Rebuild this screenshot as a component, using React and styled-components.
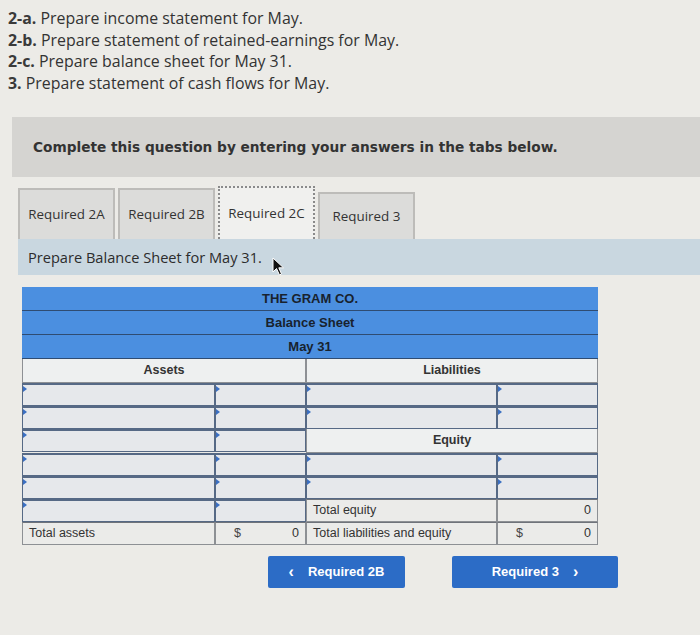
import { Fragment } from "react";
import styled, { createGlobalStyle, css } from "styled-components";

const GlobalStyle = createGlobalStyle`
  html, body {
    margin: 0;
    padding: 0;
    background: #ecebe7;
  }
  body {
    font-family: "Open Sans", "Liberation Sans", sans-serif;
    color: #2e2e2e;
  }
`;

const Page = styled.div`
  width: 700px;
  height: 635px;
  overflow: hidden;
  position: relative;
  background: #ecebe7;
`;

const TaskList = styled.ol`
  list-style: none;
  margin: 0;
  padding: 8px 0 0 8px;
  font-family: "Open Sans", sans-serif;
  font-size: 15.9px;
  line-height: 21.7px;
  color: #333;
`;

const TaskNum = styled.b`
  font-weight: 700;
  color: #3a3a3a;
`;

const Banner = styled.div`
  margin: 22px 0 0 12px;
  height: 60px;
  display: flex;
  align-items: center;
  padding-left: 21px;
  background: #d5d4d1;
  font-family: "DejaVu Sans", Verdana, sans-serif;
  font-weight: 700;
  font-size: 13.7px;
  color: #333;
`;

const TabRow = styled.div`
  display: flex;
  align-items: flex-end;
  gap: 3px;
  margin: 9px 0 0 18px;
  height: 53px;
`;

const Tab = styled.div`
  width: 97px;
  height: ${({ $short }) => ($short ? "47px" : "51px")};
  box-sizing: border-box;
  display: flex;
  align-items: center;
  justify-content: center;
  font-family: "Open Sans", sans-serif;
  font-size: 13.4px;
  color: #333;
  background: #dcdcda;
  border: 2px solid #bdbcb9;
  border-bottom: none;
  ${({ $active }) =>
    $active &&
    css`
      background: #f0f0ee;
      border: 2px dotted #8a8a8a;
      border-bottom: none;
      height: 53px;
    `}
`;

const PromptBar = styled.div`
  position: relative;
  margin-left: 18px;
  height: 36px;
  display: flex;
  align-items: center;
  padding-left: 10px;
  background: #c9d7e0;
  font-family: "Open Sans", sans-serif;
  font-size: 14.6px;
  color: #2c2c2c;
`;

const Cursor = styled.svg`
  position: absolute;
  left: 254px;
  top: 18px;
`;

const Sheet = styled.div`
  margin: 12px 0 0 22px;
  width: 576px;
  display: grid;
  grid-template-columns: 193px 91px 191px 101px;
  font-family: "Liberation Sans", Arial, sans-serif;
  font-size: 12.5px;
  color: #2a2a2a;
`;

const TitleCell = styled.div`
  grid-column: span 4;
  height: 23px;
  display: flex;
  align-items: center;
  justify-content: center;
  background: #4b8fe0;
  border-bottom: 1px solid #2f4c72;
  font-weight: 700;
  font-size: 13px;
  color: #18222e;
`;

const HeadCell = styled.div`
  grid-column: span 2;
  height: 24px;
  box-sizing: border-box;
  display: flex;
  align-items: center;
  justify-content: center;
  background: #eef0f0;
  border: 1px solid #8d9094;
  border-top: none;
  font-weight: 700;
  color: #333;
`;

const InputCell = styled.div`
  position: relative;
  height: 23px;
  box-sizing: border-box;
  background: #e6e8eb;
  border: 1px solid #566985;
  border-top-width: 2px;

  &::before {
    content: "";
    position: absolute;
    left: 0;
    top: 1px;
    border-left: 4px solid #3b6fc2;
    border-top: 3px solid transparent;
    border-bottom: 3px solid transparent;
  }
`;

const TotalCell = styled.div`
  height: 23px;
  box-sizing: border-box;
  display: flex;
  align-items: center;
  justify-content: ${({ $amount }) => ($amount ? "space-between" : "flex-start")};
  padding: ${({ $amount }) => ($amount ? "0 6px 0 18px" : "0 6px")};
  background: #ebebe9;
  border: 1px solid #8d9094;
  border-top-color: #6f737a;
  color: #333;
`;

const Dollar = styled.span`
  color: #444;
`;

const ButtonRow = styled.div`
  display: flex;
  gap: 47px;
  margin: 11px 0 0 268px;
`;

const NavButton = styled.button`
  width: ${({ $wide }) => ($wide ? "166px" : "137px")};
  height: 32px;
  border: none;
  border-radius: 2px;
  background: #2c6cc6;
  color: #fff;
  font-family: "Liberation Sans", Arial, sans-serif;
  font-weight: 700;
  font-size: 13px;
  display: flex;
  align-items: center;
  justify-content: center;
  gap: 14px;
  cursor: pointer;
`;

const Chevron = styled.span`
  font-size: 16px;
  font-weight: 700;
`;

const tasks = [
  ["2-a.", "Prepare income statement for May."],
  ["2-b.", "Prepare statement of retained-earnings for May."],
  ["2-c.", "Prepare balance sheet for May 31."],
  ["3.", "Prepare statement of cash flows for May."],
];

const tabs = ["Required 2A", "Required 2B", "Required 2C", "Required 3"];

// right-hand side of each body row; the left side is always two inputs
const rightSide = ["input", "input", "equity", "input", "input", "totalEquity"];

export default function App() {
  return (
    <Page>
      <GlobalStyle />
      <TaskList>
        {tasks.map(([num, text]) => (
          <li key={num}>
            <TaskNum>{num}</TaskNum> {text}
          </li>
        ))}
      </TaskList>

      <Banner>Complete this question by entering your answers in the tabs below.</Banner>

      <TabRow>
        {tabs.map((t, i) => (
          <Tab key={t} $active={i === 2} $short={i === 3}>
            {t}
          </Tab>
        ))}
      </TabRow>

      <PromptBar>
        Prepare Balance Sheet for May 31.
        <Cursor width="14" height="20" viewBox="0 0 14 20" aria-hidden="true">
          <path d="M1 1 L1 15 L4.5 11.5 L7.5 18 L9.5 17 L6.8 10.8 L11.5 10.8 Z" fill="#111" stroke="#fff" strokeWidth="1" />
        </Cursor>
      </PromptBar>

      <Sheet>
        <TitleCell>THE GRAM CO.</TitleCell>
        <TitleCell>Balance Sheet</TitleCell>
        <TitleCell>May 31</TitleCell>
        <HeadCell>Assets</HeadCell>
        <HeadCell>Liabilities</HeadCell>

        {rightSide.map((kind, i) => (
          <Fragment key={i}>
            <InputCell />
            <InputCell />
            {kind === "input" && (
              <>
                <InputCell />
                <InputCell />
              </>
            )}
            {kind === "equity" && <HeadCell>Equity</HeadCell>}
            {kind === "totalEquity" && (
              <>
                <TotalCell>Total equity</TotalCell>
                <TotalCell $amount>
                  <span />
                  <span>0</span>
                </TotalCell>
              </>
            )}
          </Fragment>
        ))}

        <TotalCell>Total assets</TotalCell>
        <TotalCell $amount>
          <Dollar>$</Dollar>
          <span>0</span>
        </TotalCell>
        <TotalCell>Total liabilities and equity</TotalCell>
        <TotalCell $amount>
          <Dollar>$</Dollar>
          <span>0</span>
        </TotalCell>
      </Sheet>

      <ButtonRow>
        <NavButton>
          <Chevron>&lsaquo;</Chevron>
          Required 2B
        </NavButton>
        <NavButton $wide>
          Required 3
          <Chevron>&rsaquo;</Chevron>
        </NavButton>
      </ButtonRow>
    </Page>
  );
}
